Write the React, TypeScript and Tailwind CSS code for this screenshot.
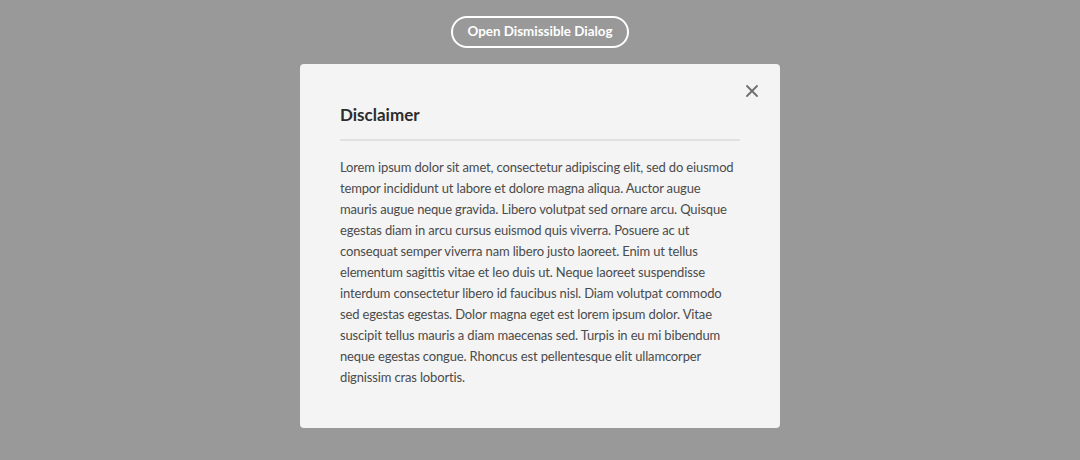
import React from 'react';

const lines = [
  'Lorem ipsum dolor sit amet, consectetur adipiscing elit, sed do eiusmod',
  'tempor incididunt ut labore et dolore magna aliqua. Auctor augue',
  'mauris augue neque gravida. Libero volutpat sed ornare arcu. Quisque',
  'egestas diam in arcu cursus euismod quis viverra. Posuere ac ut',
  'consequat semper viverra nam libero justo laoreet. Enim ut tellus',
  'elementum sagittis vitae et leo duis ut. Neque laoreet suspendisse',
  'interdum consectetur libero id faucibus nisl. Diam volutpat commodo',
  'sed egestas egestas. Dolor magna eget est lorem ipsum dolor. Vitae',
  'suscipit tellus mauris a diam maecenas sed. Turpis in eu mi bibendum',
  'neque egestas congue. Rhoncus est pellentesque elit ullamcorper',
  'dignissim cras lobortis.',
];

export default function App() {
  return (
    <div className="w-[1080px] h-[460px] bg-[#999999] flex flex-col items-center pt-4 font-['Lato',sans-serif] [font-variant-ligatures:none]">
      <button className="h-8 px-[14px] rounded-full border-2 border-white text-white text-[13.4px] font-bold leading-none">
        Open Dismissible Dialog
      </button>

      <div className="relative mt-4 w-[480px] bg-[#f4f4f4] rounded p-10">
        <button className="absolute top-[20px] right-[21px] w-[14px] h-[14px] flex items-center justify-center text-[#6e6e6e]">
          <svg width="14" height="14" viewBox="0 0 14 14" fill="none" stroke="currentColor" strokeWidth="1.8" strokeLinecap="round">
            <path d="M2 2 L12 12 M12 2 L2 12" />
          </svg>
        </button>
        <h2 className="text-[17px] leading-[22px] font-bold text-[#2c2c2c]">Disclaimer</h2>
        <div className="mt-[13px] h-[2px] bg-[#e1e1e1]" />
        <div className="mt-4 text-[13px] tracking-[-0.15px] leading-[21px] text-[#4b4b4b]">
          {lines.map(l => (
            <div key={l} className="whitespace-nowrap">{l}</div>
          ))}
        </div>
      </div>
    </div>
  );
}
